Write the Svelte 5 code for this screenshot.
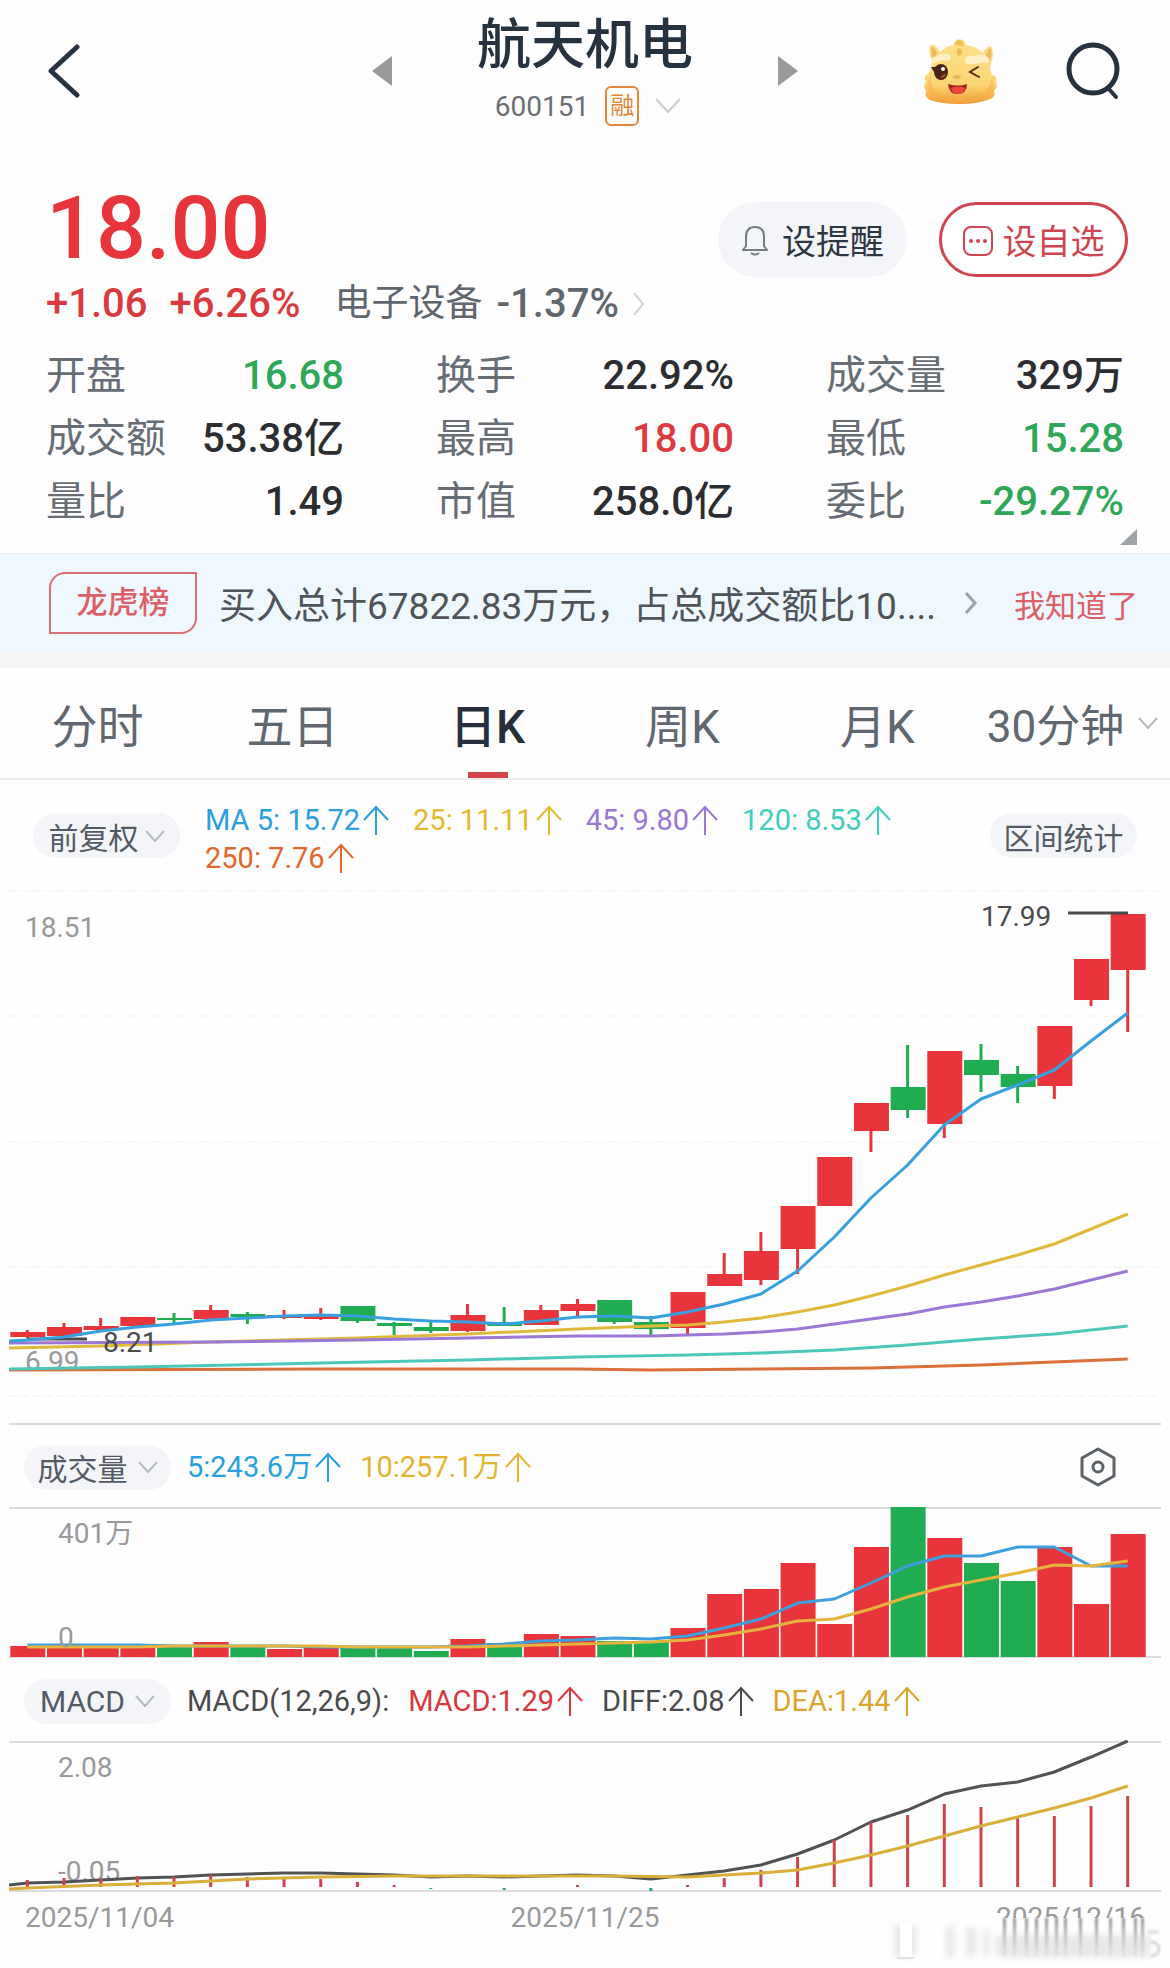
<script lang="ts">
	type Point = [number, number];
	type Candle = [string, number, number, number, number];

	const stats = [
		{ label: "开盘", value: "16.68", tone: "down" },
		{ label: "换手", value: "22.92%", tone: "" },
		{ label: "成交量", value: "329万", tone: "" },
		{ label: "成交额", value: "53.38亿", tone: "" },
		{ label: "最高", value: "18.00", tone: "up" },
		{ label: "最低", value: "15.28", tone: "down" },
		{ label: "量比", value: "1.49", tone: "" },
		{ label: "市值", value: "258.0亿", tone: "" },
		{ label: "委比", value: "-29.27%", tone: "down" }
	];

	const tabs = ["分时", "五日", "日K", "周K", "月K"];
	let active = $state("日K");

	const averages = [
		{ text: "MA 5: 15.72", color: "#2b9fe0" },
		{ text: "25: 11.11", color: "#e3b92f" },
		{ text: "45: 9.80", color: "#9a76d6" },
		{ text: "120: 8.53", color: "#41cdbd" },
		{ text: "250: 7.76", color: "#e2672a" }
	];

	const volumeAverages = [
		{ text: "5:243.6万", color: "#2b9fe0" },
		{ text: "10:257.1万", color: "#e3b42f" }
	];

	const macdValues = [
		{ text: "MACD:1.29", color: "#d9363e" },
		{ text: "DIFF:2.08", color: "#4a4a4c" },
		{ text: "DEA:1.44", color: "#d9a52c" }
	];

	// colour, body top, body bottom, high, low
	const candles: Candle[] = [
		["r", 1332, 1337, 1330, 1338],
		["r", 1327, 1336, 1323, 1336],
		["r", 1326, 1330, 1318, 1330],
		["r", 1317, 1326, 1317, 1326],
		["g", 1318, 1320, 1313, 1323],
		["r", 1310, 1319, 1305, 1319],
		["g", 1314, 1317, 1312, 1324],
		["r", 1315, 1318, 1310, 1319],
		["r", 1316, 1319, 1308, 1320],
		["g", 1306, 1321, 1306, 1323],
		["g", 1323, 1326, 1322, 1335],
		["g", 1327, 1331, 1322, 1333],
		["r", 1315, 1331, 1304, 1332],
		["g", 1322, 1326, 1307, 1326],
		["r", 1310, 1325, 1305, 1325],
		["r", 1304, 1311, 1299, 1317],
		["g", 1300, 1322, 1300, 1324],
		["g", 1322, 1329, 1316, 1335],
		["r", 1292, 1328, 1292, 1334],
		["r", 1274, 1286, 1253, 1286],
		["r", 1251, 1280, 1232, 1285],
		["r", 1206, 1249, 1206, 1274],
		["r", 1157, 1206, 1157, 1206],
		["r", 1103, 1131, 1103, 1152],
		["g", 1087, 1110, 1045, 1118],
		["r", 1051, 1124, 1051, 1138],
		["g", 1060, 1075, 1044, 1092],
		["g", 1074, 1087, 1066, 1103],
		["r", 1026, 1086, 1026, 1099],
		["r", 959, 1000, 959, 1006],
		["r", 914, 970, 914, 1032]
	];

	const ma5 = [1340, 1337, 1331, 1327, 1324, 1320, 1318, 1316, 1315, 1316, 1319, 1321, 1322, 1324, 1321, 1317, 1316, 1318, 1312, 1304, 1294, 1271, 1237, 1198, 1165, 1125, 1099, 1085, 1070, 1041, 1013];
	const ma25: Point[] = [[-0.5, 1348], [2, 1346], [5, 1342], [9, 1338], [12, 1334], [15, 1329], [17, 1326], [18, 1325], [19, 1322], [20, 1318], [21, 1312], [22, 1305], [23, 1296], [24, 1286], [25, 1275], [26, 1265], [27, 1255], [28, 1244], [29, 1229], [30, 1214]];
	const ma45: Point[] = [[-0.5, 1343], [5, 1342], [9, 1340], [15, 1336], [17, 1336], [19, 1334], [20, 1332], [21, 1329], [22, 1324], [23, 1319], [24, 1314], [25, 1307], [26, 1302], [27, 1296], [28, 1289], [29, 1280], [30, 1271]];
	const ma120: Point[] = [[-0.5, 1369], [3, 1367], [8, 1363], [12, 1360], [15, 1357], [18, 1355], [20, 1353], [22, 1350], [24, 1345], [26, 1339], [28, 1334], [30, 1326]];
	const ma250: Point[] = [[-0.5, 1370], [8, 1369], [15, 1369], [17, 1370], [20, 1369], [23, 1368], [26, 1365], [30, 1359]];

	const volumes = [1646, 1646, 1646, 1646, 1647, 1642, 1647, 1649, 1648, 1648, 1648, 1651, 1639, 1643, 1634, 1636, 1641, 1641, 1628, 1594, 1589, 1563, 1624, 1547, 1507, 1538, 1563, 1581, 1547, 1604, 1534];
	const volume5 = [1645, 1645, 1645, 1645, 1646, 1646, 1646, 1646, 1647, 1647, 1647, 1647, 1646, 1644, 1641, 1640, 1638, 1639, 1636, 1628, 1619, 1603, 1599, 1583, 1566, 1556, 1556, 1547, 1547, 1566, 1566];
	const volume10 = [1647, 1647, 1647, 1647, 1646, 1646, 1646, 1646, 1646, 1647, 1647, 1647, 1647, 1646, 1645, 1644, 1643, 1642, 1640, 1635, 1629, 1621, 1619, 1609, 1597, 1587, 1580, 1573, 1565, 1566, 1561];

	const diff = [1883, 1882, 1880, 1878, 1877, 1875, 1874, 1873, 1873, 1874, 1875, 1877, 1876, 1877, 1876, 1875, 1876, 1879, 1875, 1871, 1865, 1854, 1840, 1822, 1810, 1794, 1786, 1782, 1772, 1757, 1741];
	const dea: Point[] = [[-0.5, 1889], [0, 1888], [2, 1885], [4, 1883], [6, 1879], [8, 1877], [10, 1876], [16, 1876], [18, 1877], [19, 1875], [20, 1873], [21, 1870], [22, 1863], [23, 1855], [24, 1846], [25, 1836], [26, 1826], [27, 1817], [28, 1808], [29, 1798], [30, 1786]];
	const histogram: Point[] = [[0, 1880], [1, 1878], [2, 1879], [3, 1876], [4, 1877], [5, 1875], [6, 1877], [7, 1879], [8, 1879], [9, 1882], [10, 1885], [15, 1885], [18, 1885], [19, 1878], [20, 1870], [21, 1857], [22, 1840], [23, 1822], [24, 1815], [25, 1804], [26, 1807], [27, 1817], [28, 1816], [29, 1806], [30, 1796]];
	const negatives: Point[] = [[11, 1889], [13, 1890], [17, 1891]];

	const streaks = [121, 131, 143, 153, 163, 173, 182, 197, 213, 227, 240, 252, 259];

	const step = 36.68;
	const cx = (i: number) => 27.3 + i * step;
	const fill = (c: string) => (c === "r" ? "#e8343b" : "#20ad52");
	const line = (points: Point[]) => points.map(([i, y]) => `${cx(i).toFixed(1)},${y}`).join(" ");
	const series = (values: number[]) => line(values.map((y, i): Point => [i, y]));
</script>

{#snippet arrow()}
	<svg class="arrow" viewBox="0 0 26 31" aria-hidden="true"><path d="M1 15 13 2 25 15M13 2V30" /></svg>
{/snippet}

{#snippet caret()}
	<svg class="caret" viewBox="0 0 20 12" aria-hidden="true"><path d="M1 1 10 11 19 1" /></svg>
{/snippet}

<main class="page">
	<header class="header">
		<button class="icon-button" aria-label="返回">
			<svg width="34" height="58" viewBox="0 0 34 58"><path d="M29 4 3 28 29 52" fill="none" stroke="#27323f" stroke-width="5" stroke-linecap="round" stroke-linejoin="round" /></svg>
		</button>
		<div class="switcher">
			<button class="icon-button" aria-label="上一只">
				<svg width="22" height="32" viewBox="0 0 22 32"><path d="M21 0V30L1 15Z" fill="#999" /></svg>
			</button>
			<div class="stock">
				<h1 class="stock__name">航天机电</h1>
				<div class="stock__meta">
					<span>600151</span>
					<span class="stock__badge">融</span>
					<svg width="26" height="16" viewBox="0 0 26 16"><path d="M1 1 13 14 25 1" fill="none" stroke="#ccc" stroke-width="2" /></svg>
				</div>
			</div>
			<button class="icon-button" aria-label="下一只">
				<svg width="22" height="32" viewBox="0 0 22 32"><path d="M1 0V30L21 15Z" fill="#999" /></svg>
			</button>
		</div>
		<div class="header__tools">
			<button class="icon-button" aria-label="助手">
				<svg width="76" height="68" viewBox="0 0 76 68">
					<defs>
						<linearGradient id="fur" x1="0" y1="0" x2="0" y2="1">
							<stop offset="0" stop-color="#fde08b" />
							<stop offset="0.7" stop-color="#fcd673" />
							<stop offset="1" stop-color="#f09a35" />
						</linearGradient>
					</defs>
					<path d="M10 23C6 15 7 8 10 6Q15 8 18 14Q24 8 32 7Q33 1 38 1Q43 2 44 7Q54 8 61 15Q63 9 69 8Q73 15 69 25Q67 31 70 37Q76 38 74 44Q77 49 72 53Q74 59 68 61Q56 66 38 66Q19 66 8 62Q2 59 4 53Q0 49 4 44Q1 38 6 36Q10 31 10 23Z" fill="url(#fur)" />
					<path d="M8 38Q2 52 10 58Q22 64 38 64Q58 64 67 58Q75 51 70 40Q66 55 54 57Q36 61 19 56Q8 51 8 38Z" fill="#f6ad45" opacity="0.5" />
					<path d="M32 7Q34 2 38 2Q41 3 42 8M35 11Q38 9 40 12Q41 17 37 18Q34 16 35 11" fill="#efbd50" />
					<path d="M10 8Q14 11 15 16L11 21Q8 14 10 8M68 10Q65 12 64 18L68 22Q71 15 68 10" fill="#e9b965" />
					<path d="M9 24Q8 19 14 19Q20 13 28 17Q31 21 26 23Q18 21 13 25Q10 26 9 24M43 21Q45 16 53 18Q63 14 67 21Q68 27 61 24Q53 27 45 26Q42 24 43 21" fill="#fff1c6" />
					<ellipse cx="19" cy="34" rx="7" ry="8" fill="#4b2418" />
					<path d="M9 29H15L12 34Z" fill="#4b2418" />
					<circle cx="21" cy="31" r="2" fill="#fff" />
					<path d="M19 39Q22 39 23 36" stroke="#a5562f" stroke-width="2" fill="none" />
					<path d="M56 29 48 34 57 39" fill="none" stroke="#522c1d" stroke-width="2" stroke-linecap="round" />
					<ellipse cx="35" cy="39" rx="4" ry="2" fill="#e8b95a" />
					<path d="M26 46Q36 49 45 46Q45 56 35 56Q27 56 26 46Z" fill="#9f231e" />
					<path d="M29 50Q36 47 43 50Q42 56 35 56Q30 56 29 50" fill="#ee473e" />
				</svg>
			</button>
			<button class="icon-button" aria-label="搜索">
				<svg width="56" height="60" viewBox="0 0 56 60"><circle cx="27" cy="27" r="24" fill="none" stroke="#27323f" stroke-width="5" /><path d="M42 46 50 55" stroke="#27323f" stroke-width="4" stroke-linecap="round" /></svg>
			</button>
		</div>
	</header>

	<section class="quote">
		<div>
			<div class="quote__price">18.00</div>
			<div class="quote__change">
				<span>+1.06</span>
				<span>+6.26%</span>
				<a class="quote__sector" href="/sector">
					<span class="quote__sector-name">电子设备</span>
					<span>-1.37%</span>
					<svg width="12" height="26" viewBox="0 0 12 26"><path d="M1 2 10 13 1 24" fill="none" stroke="#d2d4d7" stroke-width="2" /></svg>
				</a>
			</div>
		</div>
		<div class="quote__actions">
			<button class="action">
				<svg width="28" height="32" viewBox="0 0 28 32" fill="none" stroke="#777d85" stroke-width="2" stroke-linejoin="round"><path d="M2 26H26L23 22V13Q23 3 14 3Q5 3 5 13V22ZM10 29Q14 32 18 29" /></svg>
				设提醒
			</button>
			<button class="action action--outline">
				<svg width="30" height="32" viewBox="0 0 30 32"><rect x="1" y="3" width="28" height="28" rx="7" fill="none" stroke="#cf4650" stroke-width="2" /><g fill="#cf4650"><circle cx="8" cy="17" r="2" /><circle cx="15" cy="17" r="2" /><circle cx="22" cy="17" r="2" /></g></svg>
				设自选
			</button>
		</div>
	</section>

	<dl class="stats">
		{#each stats as s}
			<div class="stats__item">
				<dt>{s.label}</dt>
				<dd class={s.tone}>{s.value}</dd>
			</div>
		{/each}
	</dl>
	<div class="expand">
		<svg width="18" height="16" viewBox="0 0 18 16"><path d="M17 0V16H0Z" fill="#9fa3a6" /></svg>
	</div>

	<aside class="notice">
		<span class="notice__tag">龙虎榜</span>
		<span class="notice__text">买入总计67822.83万元，占总成交额比10....</span>
		<svg width="14" height="24" viewBox="0 0 14 24"><path d="M2 2 11 12 2 22" fill="none" stroke="#9aa3ad" stroke-width="3" /></svg>
		<button class="notice__dismiss">我知道了</button>
	</aside>

	<nav class="tabs">
		{#each tabs as tab}
			<button class="tabs__item" class:tabs__item--active={active === tab} onclick={() => (active = tab)}>{tab}</button>
		{/each}
		<button class="tabs__item tabs__item--more">30分钟 {@render caret()}</button>
	</nav>

	<section class="averages">
		<button class="pill">前复权 {@render caret()}</button>
		<div class="legend legend--wrap">
			{#each averages as a}
				<span class="legend__item" style:color={a.color}>{a.text}{@render arrow()}</span>
			{/each}
		</div>
		<button class="pill">区间统计</button>
	</section>

	<svg class="chart" viewBox="9 888 1152 537" role="img" aria-label="日K线">
		{#each [891, 1016, 1142, 1267, 1396] as y}
			<path class="chart__grid" d="M9 {y}H1161" />
		{/each}
		<text x="25" y="937">18.51</text>
		<text x="25" y="1371">6.99</text>
		{#each candles as [c, top, bottom, high, low], i}
			<path d="M{cx(i)} {high}V{low}" stroke={fill(c)} stroke-width="3" />
			<rect x={cx(i) - 17} y={top} width="35" height={bottom - top} fill={fill(c)} />
		{/each}
		<path d="M27 1339H87M1068 913H1128" stroke="#4a4a4c" stroke-width="3" />
		<g class="chart__lines">
			<polyline points={line(ma250)} stroke="#d9703a" />
			<polyline points={line(ma120)} stroke="#4cc8bb" />
			<polyline points={line(ma25)} stroke="#e0b93c" />
			<polyline points={line(ma45)} stroke="#9c78d6" />
			<polyline points="9,1341 {series(ma5)}" stroke="#38a0de" />
		</g>
		<text class="chart__mark" x="103" y="1352">8.21</text>
		<text class="chart__mark" x="981" y="926">17.99</text>
		<path class="chart__rule" d="M9 1424H1161" />
	</svg>

	<section class="indicator">
		<button class="pill pill--wide">成交量 {@render caret()}</button>
		<div class="legend">
			{#each volumeAverages as v}
				<span class="legend__item" style:color={v.color}>{v.text}{@render arrow()}</span>
			{/each}
		</div>
		<button class="icon-button" aria-label="指标设置">
			<svg width="36" height="40" viewBox="0 0 36 40" fill="none" stroke="#5d6269" stroke-width="3" stroke-linejoin="round"><path d="M18 2 34 11V29L18 38 2 29V11Z" /><circle cx="18" cy="20" r="5" /></svg>
		</button>
	</section>

	<svg class="chart" viewBox="9 1506 1152 153" role="img" aria-label="成交量">
		<path class="chart__rule" d="M9 1508H1161M9 1657H1161" />
		{#each volumes as top, i}
			<rect x={cx(i) - 17} y={top} width="35" height={1657 - top} fill={fill(candles[i][0])} />
		{/each}
		<g class="chart__lines">
			<polyline points={series(volume5)} stroke="#3d9fdd" />
			<polyline points={series(volume10)} stroke="#e6b43c" />
		</g>
		<text x="58" y="1543">401万</text>
		<text x="58" y="1647">0</text>
	</svg>

	<section class="indicator">
		<button class="pill pill--wide">MACD {@render caret()}</button>
		<div class="legend">
			<span class="legend__item legend__item--plain">MACD(12,26,9):</span>
			{#each macdValues as m}
				<span class="legend__item" style:color={m.color}>{m.text}{@render arrow()}</span>
			{/each}
		</div>
	</section>

	<svg class="chart" viewBox="9 1740 1152 153" role="img" aria-label="MACD">
		<path class="chart__rule" d="M9 1742H1161M9 1891H1161" />
		<text x="58" y="1777">2.08</text>
		<text x="58" y="1881">-0.05</text>
		<g class="chart__lines">
			<polyline points="9,1885 {series(diff)}" stroke="#505254" />
			{#each histogram as [i, top]}
				<path d="M{cx(i)} {top}V1887" stroke="#cf434a" />
			{/each}
			{#each negatives as [i, bottom]}
				<path d="M{cx(i)} 1888V{bottom}" stroke="#2ba663" />
			{/each}
			<polyline points={line(dea)} stroke="#d9ae3b" />
		</g>
	</svg>

	<footer class="dates">
		<time>2025/11/04</time>
		<time>2025/11/25</time>
		<time>2025/12/16</time>
		<svg class="dates__haze" viewBox="0 0 280 48" aria-hidden="true">
			<defs>
				<filter id="soft" x="-20%" y="-20%" width="140%" height="140%"><feGaussianBlur stdDeviation="3" /></filter>
				<filter id="edge" x="-50%" y="-10%" width="200%" height="120%"><feGaussianBlur stdDeviation="1" /></filter>
				<linearGradient id="fade" x1="0" y1="0" x2="0" y2="1">
					<stop offset="0" stop-color="#8c8d8f" />
					<stop offset="0.5" stop-color="#c4c4c6" />
					<stop offset="1" stop-color="#e6e6e7" />
				</linearGradient>
			</defs>
			<rect x="108" y="3" width="162" height="45" fill="#fefefe" />
			<g filter="url(#soft)" fill="#e4e4e6">
				<path d="M12 10H34V42H12ZM64 12H73V42H64ZM84 12H94V42H84ZM101 14H107V42H101ZM114 20H268V42H114Z" opacity="0.8" />
			</g>
			<rect x="18" y="8" width="12" height="35" fill="#fff" />
			<path d="M15 43H32" stroke="#c6c6c8" stroke-width="1" />
			<g filter="url(#edge)">
				{#each streaks as x}
					<rect {x} y="3" width="3" height="39" fill="url(#fade)" />
				{/each}
				<path d="M266 17H277M268 27Q278 27 277 35Q276 41 268 41" fill="none" stroke="#d9d9db" stroke-width="3" />
			</g>
		</svg>
	</footer>
</main>

<style>
	:global(body) {
		background: #fefefe;
	}

	.page {
		font-family: Roboto, "Noto Sans CJK SC", sans-serif;
		color: #2b2d30;
		overflow: hidden;
	}

	button {
		font: inherit;
		color: inherit;
		background: none;
		border: 0;
		padding: 0;
		cursor: pointer;
	}

	svg {
		display: block;
		flex-shrink: 0;
	}

	.header {
		display: grid;
		grid-template-columns: 1fr auto 1fr;
		height: 120px;
		padding: 12px 48px 0;
	}

	.header > .icon-button {
		justify-self: start;
	}

	.icon-button {
		display: flex;
		align-items: center;
	}

	.switcher {
		display: flex;
		gap: 84px;
	}

	.stock {
		display: flex;
		flex-direction: column;
		align-items: center;
	}

	.stock__name {
		margin: 0;
		font-size: 54px;
		line-height: 68px;
		font-weight: 500;
		color: #27323f;
	}

	.stock__meta {
		display: flex;
		align-items: center;
		gap: 16px;
		padding: 6px 0 0 6px;
		font-size: 28px;
		color: #6b6f74;
	}

	.stock__badge {
		box-sizing: border-box;
		width: 34px;
		border: 2px solid #e2873a;
		border-radius: 6px;
		font-size: 24px;
		line-height: 36px;
		text-align: center;
		color: #e2873a;
	}

	.header__tools {
		display: flex;
		justify-content: flex-end;
		gap: 68px;
	}

	.quote {
		display: flex;
		justify-content: space-between;
		padding: 44px 42px 0 46px;
	}

	.quote__price {
		font-size: 88px;
		line-height: 104px;
		font-weight: 500;
		color: #e8343b;
	}

	.quote__change {
		display: flex;
		align-items: center;
		gap: 22px;
		font-size: 40px;
		line-height: 48px;
		font-weight: 500;
		color: #d9393f;
	}

	.quote__sector {
		display: flex;
		align-items: center;
		gap: 14px;
		margin-left: 12px;
		color: #5f666e;
		text-decoration: none;
	}

	.quote__sector-name {
		font-size: 37px;
		font-weight: 400;
	}

	.quote__actions {
		display: flex;
		align-items: flex-start;
		gap: 32px;
		padding-top: 38px;
		margin-top: -12px;
	}

	.action {
		box-sizing: border-box;
		display: flex;
		align-items: center;
		justify-content: center;
		gap: 13px;
		width: 189px;
		height: 75px;
		border-radius: 38px;
		background: #f4f5f8;
		font-size: 34px;
		color: #2d3742;
	}

	.action--outline {
		gap: 10px;
		border: 3px solid #cf4650;
		background: #fff;
		color: #cf4650;
	}

	.stats {
		display: grid;
		grid-template-columns: repeat(3, 1fr);
		column-gap: 92px;
		margin: 0;
		padding: 16px 46px 0;
		font-size: 40px;
		line-height: 63px;
	}

	.stats__item {
		display: flex;
		justify-content: space-between;
	}

	.stats__item dt {
		color: #666d75;
	}

	.stats__item dd {
		margin: 0;
		font-weight: 500;
	}

	.stats__item .up {
		color: #dd3b41;
	}

	.stats__item .down {
		color: #2fa758;
	}

	.expand {
		display: flex;
		justify-content: flex-end;
		height: 24px;
		margin-top: -4px;
		padding-right: 32px;
	}

	.notice {
		display: flex;
		align-items: center;
		box-sizing: border-box;
		height: 115px;
		padding: 0 32px 0 49px;
		background: #eff7ff;
		border-top: 1px solid #eef0f4;
		border-bottom: 16px solid #f5f5f6;
	}

	.notice__tag {
		box-sizing: border-box;
		width: 148px;
		border: 2px solid #dc6e76;
		border-radius: 16px 0;
		font-size: 31px;
		line-height: 58px;
		text-align: center;
		font-weight: 500;
		color: #dc6068;
	}

	.notice__text {
		flex: 1;
		min-width: 0;
		margin: 0 24px 0 22px;
		overflow: hidden;
		white-space: nowrap;
		font-size: 37px;
		color: #505458;
	}

	.notice__dismiss {
		margin-left: 36px;
		font-size: 31px;
		color: #dc6068;
	}

	.tabs {
		display: grid;
		grid-template-columns: repeat(6, 1fr);
		border-bottom: 2px solid #ececee;
	}

	.tabs__item {
		position: relative;
		display: flex;
		align-items: center;
		justify-content: center;
		height: 110px;
		font-size: 46px;
		white-space: nowrap;
		color: #61676f;
	}

	.tabs__item--more {
		gap: 14px;
		font-size: 44px;
	}

	.tabs__item--active {
		font-weight: 500;
		color: #262f3b;
	}

	.tabs__item--active::after {
		content: "";
		position: absolute;
		bottom: 0;
		left: 50%;
		width: 40px;
		height: 6px;
		margin-left: -20px;
		background: #d4454a;
	}

	.caret {
		width: 20px;
		height: 12px;
	}

	.caret path {
		fill: none;
		stroke: #b6b9be;
		stroke-width: 2px;
	}

	.averages {
		display: flex;
		align-items: flex-start;
		height: 77px;
		padding: 21px 33px 10px;
	}

	.averages .pill {
		margin-top: 12px;
	}

	.pill {
		display: flex;
		align-items: center;
		justify-content: center;
		gap: 6px;
		min-width: 147px;
		height: 45px;
		border-radius: 23px;
		background: #f4f5f8;
		font-size: 30px;
		white-space: nowrap;
		color: #555b64;
	}

	.pill--wide {
		gap: 10px;
	}

	.legend {
		flex: 1;
		display: flex;
		column-gap: 19px;
		margin-left: 16px;
		font-size: 29px;
		line-height: 38px;
	}

	.legend--wrap {
		flex-wrap: wrap;
		column-gap: 24px;
		margin-left: 25px;
	}

	.legend__item {
		display: flex;
		align-items: center;
		gap: 3px;
		white-space: nowrap;
	}

	.legend__item--plain {
		color: #4a4a4c;
	}

	.arrow {
		width: 26px;
		height: 31px;
	}

	.arrow path {
		fill: none;
		stroke: currentColor;
		stroke-width: 2px;
	}

	.chart {
		width: calc(100% - 18px);
		height: auto;
		margin: 0 9px;
	}

	.chart text {
		font-size: 28px;
		fill: #98999b;
	}

	.chart .chart__mark {
		fill: #4a4a4c;
	}

	.chart__grid {
		stroke: #f0f0f1;
		stroke-width: 1px;
		stroke-dasharray: 8 4;
	}

	.chart__rule {
		stroke: #dcdcde;
		stroke-width: 2px;
	}

	.chart__lines {
		fill: none;
		stroke-width: 3px;
		stroke-linejoin: round;
	}

	.indicator {
		box-sizing: border-box;
		display: flex;
		align-items: center;
		height: 81px;
		padding: 3px 54px 0 24px;
	}

	.dates {
		position: relative;
		display: flex;
		justify-content: space-between;
		padding: 8px 25px 32px;
		font-size: 28px;
		line-height: 34px;
		color: #98999b;
	}

	.dates__haze {
		position: absolute;
		top: 22px;
		right: 8px;
		width: 280px;
	}
</style>
